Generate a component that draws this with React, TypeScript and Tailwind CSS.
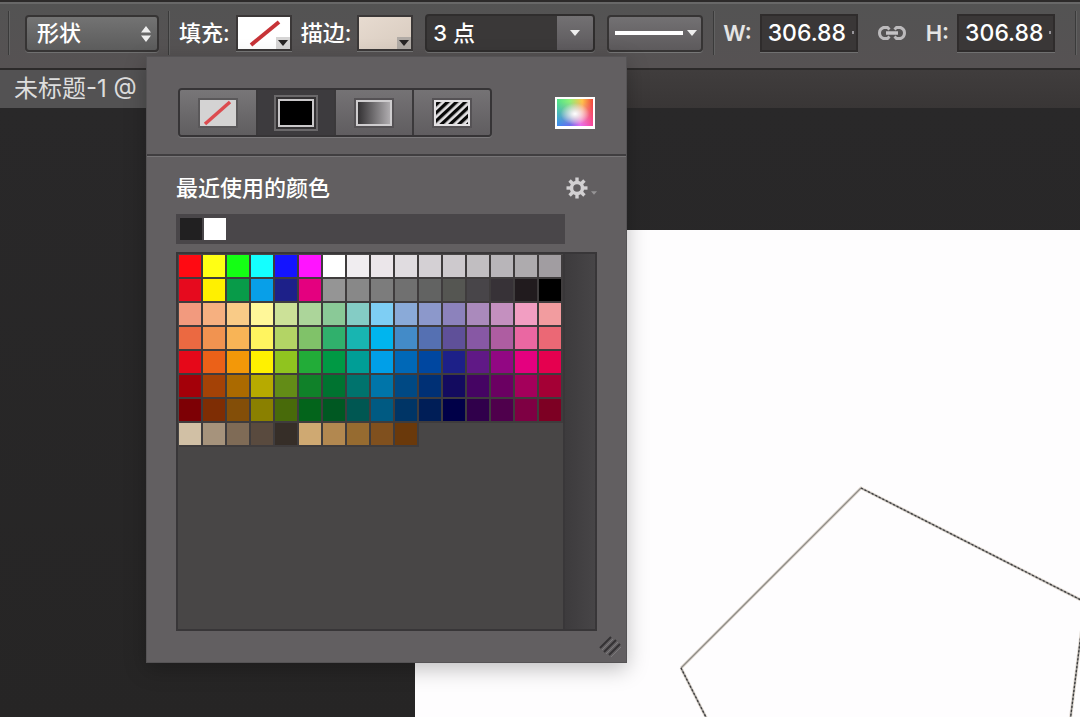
import React from "react";

const SWATCH_ROWS: string[][] = [
  ["#ff0a12", "#ffff14", "#14ff14", "#14ffff", "#1414ff", "#ff14ff", "#ffffff", "#f0edf0", "#ebe6ea", "#e0dce0", "#d4d0d4", "#cdc9cd", "#c1bec1", "#b8b5b9", "#aeabae", "#a19da1"],
  ["#e60a1e", "#fff000", "#089b49", "#089fe8", "#1d2089", "#e4007f", "#959595", "#888888", "#7c7c7c", "#707070", "#626362", "#555652", "#484549", "#373237", "#211b1e", "#000000"],
  ["#f29a7e", "#f6b080", "#f9cb87", "#fff799", "#cce198", "#acd59a", "#8ac997", "#84ccc5", "#7ecef4", "#8aaad8", "#8c98cb", "#8c82bc", "#aa8abc", "#c490bf", "#f29ec2", "#f29c9f"],
  ["#eb6941", "#f19350", "#f8b456", "#fff45f", "#b3d465", "#80c269", "#30b06c", "#18b5b1", "#00b5ee", "#438bc8", "#5570b2", "#5f5099", "#8758a4", "#ae5da1", "#ea67a2", "#eb6875"],
  ["#e60819", "#eb6118", "#f39808", "#fff100", "#90c41f", "#22ac38", "#009944", "#009e96", "#009fe8", "#0068b7", "#0047a0", "#1d2088", "#601986", "#920783", "#e4007f", "#e5004f"],
  ["#a40009", "#a44206", "#ab6a00", "#b7aa00", "#638c17", "#108129", "#007330", "#00736d", "#0075a9", "#004984", "#003075", "#130b5f", "#450463", "#6b0062", "#a4005b", "#a40035"],
  ["#7d0005", "#7e2d04", "#834e08", "#8a8000", "#486a0a", "#03641b", "#005822", "#005752", "#005a82", "#003566", "#001e57", "#000048", "#30004b", "#4f004c", "#7e0043", "#7d0023"],
  ["#d1c0a5", "#a6937c", "#7f6b56", "#594a3e", "#362e28", "#cfa972", "#b28850", "#966b30", "#80501e", "#6a390b"],
];

function Down({ className }: { className: string }) {
  return (
    <svg viewBox="0 0 10 6" className={className} aria-hidden="true">
      <path d="M0 0H10L5 6Z" fill="currentColor" />
    </svg>
  );
}

function Separator() {
  return <div className="h-11 w-px shrink-0 bg-[#3a3a3a] shadow-[1px_0_0_#626262]" />;
}

function PaintWell({ label, empty }: { label: string; empty?: boolean }) {
  return (
    <button
      aria-label={label}
      className={`relative h-9 w-14 shrink-0 border-2 border-[#3b3838] shadow-[0_1px_0_#777] ${empty ? "bg-white" : "bg-linear-to-br from-[#e7dbd0] to-[#d8cbbf]"}`}
    >
      {empty && (
        <svg viewBox="0 0 52 32" className="absolute inset-0 size-full" aria-hidden="true">
          <path d="M13 28L41 5" stroke="#c73337" strokeWidth="4" />
        </svg>
      )}
      <span className={`absolute right-0 bottom-0 flex h-3 w-3.5 items-center justify-center ${empty ? "bg-[#d6d5d5]" : "bg-[#b0aaa5]"}`}>
        <Down className="h-1.5 w-2.5 text-[#262424]" />
      </span>
    </button>
  );
}

function SizeField({ label, id }: { label: string; id: string }) {
  return (
    <>
      <label htmlFor={id} className="font-semibold text-[#e4e4e4]">{label}</label>
      <div className="relative ml-2 shrink-0">
        <input
          id={id}
          defaultValue="306.88"
          className="block h-[38px] w-[98px] border-2 border-[#2f2c2c] bg-[#3a3737] pl-1.5 text-[23px] font-medium text-white shadow-[0_1px_0_#707070] outline-none"
        />
        <span className="absolute top-[17px] right-1 h-[3px] w-0.5 bg-[#98959a]" />
      </div>
    </>
  );
}

function OptionsBar() {
  return (
    <header className="flex h-[70px] shrink-0 items-center overflow-hidden border-y-2 border-[#2c2a2a] bg-linear-to-b from-[#535353] to-[#565253] pb-1 pl-2 whitespace-nowrap text-white shadow-[inset_0_2px_0_#686868]">
      <Separator />
      <div className="relative ml-4 shrink-0">
        <select
          aria-label="形状"
          className="block h-[37px] w-[134px] appearance-none rounded border-2 border-[#363434] bg-linear-to-b from-[#737373] to-[#5c5c5c] pl-2.5 font-medium text-white shadow-[0_1px_0_#707070]"
        >
          <option>形状</option>
        </select>
        <svg viewBox="0 0 10 18" className="pointer-events-none absolute top-2.5 right-2 h-[18px] w-2.5" fill="#eee" aria-hidden="true">
          <path d="M0 7.500L5 1L10 7.500ZM0 10.500H10L5 17Z" />
        </svg>
      </div>
      <div className="ml-[9px] flex"><Separator /></div>
      <span className="mr-1.5 ml-2.5 font-medium">填充:</span>
      <PaintWell label="填充" empty />
      <span className="mr-1.5 ml-[9px] font-medium">描边:</span>
      <PaintWell label="描边" />
      <div className="ml-3 flex h-[38px] w-[170px] shrink-0 overflow-hidden rounded border-2 border-[#2f2d2d] bg-[#3a3838] shadow-[0_1px_0_#707070]">
        <input aria-label="描边宽度" defaultValue="3 点" className="w-[130px] pl-1.5 font-medium outline-none" />
        <button aria-label="选择描边宽度" className="flex flex-1 items-center justify-center bg-linear-to-b from-[#737173] to-[#5d5a5d]">
          <Down className="h-1.5 w-2.5 text-[#eee]" />
        </button>
      </div>
      <button aria-label="描边类型" className="ml-3 flex h-[37px] w-24 shrink-0 items-center gap-1 rounded border-2 border-[#363434] bg-linear-to-b from-[#737173] to-[#5d5a5c] pr-1 pl-1.5 shadow-[0_1px_0_#777]">
        <span className="h-1 flex-1 bg-white" />
        <Down className="h-1.5 w-2.5 text-[#eee]" />
      </button>
      <div className="mr-[9px] ml-2.5 flex"><Separator /></div>
      <SizeField label="W:" id="shape-width" />
      <button aria-label="链接宽高" className="mx-[19px] shrink-0">
        <svg viewBox="0 0 30 18" className="h-[18px] w-[30px]" fill="none" aria-hidden="true">
          <path d="M12.500 5.500L10.500 3.500H6.500Q2.500 5 2.500 9T6.500 14.500H10.500L12.500 12.500M17.500 5.500L19.500 3.500H23.500Q27.500 5 27.500 9T23.500 14.500H19.500L17.500 12.500" stroke="#bcbabc" strokeWidth="3" />
          <path d="M9 9H21" stroke="#c4c2c4" strokeWidth="3.500" />
        </svg>
      </button>
      <SizeField label="H:" id="shape-height" />
      <div className="ml-5 flex"><Separator /></div>
    </header>
  );
}

function FillTypes() {
  return (
    <div className="flex h-[49px] w-[314px] overflow-hidden rounded border-2 border-[#363436] shadow-[0_1px_0_#7b797b]">
      <button aria-label="无颜色" className="flex flex-1 items-center justify-center border-r-2 border-[#3b393b] bg-linear-to-b from-[#787678] to-[#605e60]">
        <svg viewBox="0 0 40 30" className="h-[30px] w-10" aria-hidden="true">
          <path d="M0 0H40V30H0Z" fill="#5a585a" />
          <path d="M2 2H38V28H2Z" fill="#d4d3d3" />
          <path d="M7 26L32 4" stroke="#dc4b4f" strokeWidth="3.500" />
        </svg>
      </button>
      <button aria-label="纯色" aria-pressed="true" className="flex flex-1 items-center justify-center border-r-2 border-[#3b393b] bg-[#3d3b3e]">
        <svg viewBox="0 0 44 36" className="h-9 w-11" aria-hidden="true">
          <path d="M1 1H43V35H1Z" fill="#343234" stroke="#6a686a" strokeWidth="2" />
          <path d="M5 5H39V31H5Z" fill="#000" stroke="#c9c7c9" strokeWidth="2" />
        </svg>
      </button>
      <button aria-label="渐变" className="flex flex-1 items-center justify-center border-r-2 border-[#3b393b] bg-linear-to-b from-[#757375] to-[#605d60]">
        <svg viewBox="0 0 40 30" className="h-[30px] w-10" aria-hidden="true">
          <defs>
            <linearGradient id="gray-ramp">
              <stop stopColor="#302e30" />
              <stop offset="1" stopColor="#b3b0b3" />
            </linearGradient>
          </defs>
          <path d="M0 0H40V30H0Z" fill="#555255" />
          <path d="M3 3H37V27H3Z" fill="url(#gray-ramp)" stroke="#cfcdcf" strokeWidth="2" />
        </svg>
      </button>
      <button aria-label="图案" className="flex flex-1 items-center justify-center bg-linear-to-b from-[#757375] to-[#605d60]">
        <svg viewBox="0 0 40 30" className="h-[30px] w-10" aria-hidden="true">
          <defs>
            <pattern id="hatch" width="6" height="6" patternUnits="userSpaceOnUse" patternTransform="rotate(47)">
              <path d="M0 0H3.300V6H0Z" fill="#080808" />
            </pattern>
          </defs>
          <path d="M0 0H40V30H0Z" fill="#555255" />
          <path d="M2 2H38V28H2Z" fill="#e4e2e4" />
          <path d="M4 4H36V26H4Z" fill="url(#hatch)" />
        </svg>
      </button>
    </div>
  );
}

function Spectrum() {
  return (
    <svg viewBox="0 0 40 32" className="h-8 w-10" aria-hidden="true">
      <defs>
        <linearGradient id="hue-top">
          <stop stopColor="#4fe08a" />
          <stop offset="0.350" stopColor="#8cf07a" />
          <stop offset="0.700" stopColor="#ffc24a" />
          <stop offset="1" stopColor="#f0463c" />
        </linearGradient>
        <linearGradient id="hue-bottom">
          <stop stopColor="#3a8cf0" />
          <stop offset="0.350" stopColor="#6a6cf0" />
          <stop offset="0.650" stopColor="#e66cf4" />
          <stop offset="1" stopColor="#f8469a" />
        </linearGradient>
        <linearGradient id="fade-down" x2="0" y2="1">
          <stop offset="0.150" stopColor="#000" />
          <stop offset="0.900" stopColor="#fff" />
        </linearGradient>
        <mask id="lower">
          <path d="M0 0H40V32H0Z" fill="url(#fade-down)" />
        </mask>
        <radialGradient id="glow" cx="0.500" cy="0.550" r="0.400">
          <stop stopColor="#fff" />
          <stop offset="1" stopColor="#fff" stopOpacity="0" />
        </radialGradient>
      </defs>
      <path d="M0 0H40V32H0Z" fill="#fff" />
      <path d="M2 2H38V29H2Z" fill="url(#hue-top)" />
      <path d="M2 2H38V29H2Z" fill="url(#hue-bottom)" mask="url(#lower)" />
      <path d="M2 2H38V29H2Z" fill="url(#glow)" />
    </svg>
  );
}

function Gear() {
  const teeth = [0, 45, 90, 135, 180, 225, 270, 315];
  return (
    <svg viewBox="0 0 22 22" className="size-[22px]" fill="none" aria-hidden="true">
      <circle cx="11" cy="11" r="5.500" stroke="#d2d0d2" strokeWidth="3.500" />
      {teeth.map((angle) => (
        <path key={angle} d="M9.300 0.500H12.700V5H9.300Z" fill="#d2d0d2" transform={`rotate(${angle} 11 11)`} />
      ))}
    </svg>
  );
}

function ColorPanel() {
  return (
    <section className="absolute top-14 left-[146px] z-10 w-[481px] border border-[#555355] bg-[#625f61] shadow-[0_6px_20px_rgba(0,0,0,0.25)]">
      <div className="flex items-center justify-between border-b-2 border-[#403e40] pt-[31px] pr-[31px] pb-[17px] pl-[31px] shadow-[0_1px_0_#777577]">
        <FillTypes />
        <button aria-label="拾色器"><Spectrum /></button>
      </div>
      <div className="pr-[29px] pb-[31px] pl-[29px]">
        <div className="flex h-[58px] items-center justify-between pt-1.5">
          <h2 className="font-medium text-white">最近使用的颜色</h2>
          <button aria-label="色板选项" className="flex items-end gap-[3px]">
            <Gear />
            <Down className="mb-1 h-1 w-1.5 text-[#969496]" />
          </button>
        </div>
        <div className="mr-8 flex h-[30px] gap-0.5 bg-[#494649] p-1">
          <button aria-label="黑色" className="size-[22px] bg-[#212021]" />
          <button aria-label="白色" className="size-[22px] bg-white" />
        </div>
        <div className="mt-2 flex h-[379px] border-2 border-[#383638] bg-[#484646]">
          <div className="flex-1 pt-px pl-px">
            {SWATCH_ROWS.map((row, r) => (
              <div key={r} className="flex">
                {row.map((color, c) => (
                  <button
                    key={c}
                    aria-label={color}
                    className="box-content size-[22px] border-r-2 border-b-2 border-[#3f3c3d]"
                    style={{ backgroundColor: color }}
                  />
                ))}
              </div>
            ))}
          </div>
          <div className="w-8 border-l-2 border-[#393739] bg-linear-to-r from-[#3d3b3d] to-[#474547]" />
        </div>
      </div>
      <svg viewBox="0 0 24 24" className="absolute right-1 bottom-1 size-6" fill="none" aria-hidden="true">
        <path d="M2 14L13 3M6 18L18 6M11 21L22 10" stroke="#343234" strokeWidth="2" />
        <path d="M4 16L15 5M8 20L20 8M13 23L23 13" stroke="#7a787a" strokeWidth="1" />
      </svg>
    </section>
  );
}

export default function App() {
  return (
    <div className="relative flex h-screen flex-col overflow-hidden bg-[#282727] font-['Inter','Noto_Sans_CJK_SC',sans-serif] text-[22px]">
      <OptionsBar />
      <nav className="flex h-[38px] shrink-0 bg-linear-to-b from-[#403d3d] to-[#393636]">
        <a href="#document" className="w-96 bg-[#535253] pl-3.5 text-[24px] leading-[38px] whitespace-nowrap text-[#dddddd]">未标题-1 @</a>
      </nav>
      <main className="flex min-h-0 flex-1 bg-linear-to-b from-[#292829] to-[#262525] pt-[122px] pl-[415px]">
        <div className="flex-1 overflow-hidden bg-[#fefdfe]">
          <svg viewBox="0 0 665 487" className="h-[487px] w-[665px]" fill="none" aria-hidden="true">
            <path d="M266 438L446 258L670 372L654 500M266 438L300 505" stroke="#e0d8d0" strokeWidth="3" />
            <path d="M266 438L446 258" stroke="#8f8d88" strokeWidth="1.300" />
            <path d="M446 258L670 372L654 500M266 438L300 505" stroke="#888" strokeWidth="1.300" />
            <path d="M446 258L670 372L654 500M266 438L300 505" stroke="#3c3c3c" strokeWidth="1.300" strokeDasharray="2 2" />
          </svg>
        </div>
      </main>
      <ColorPanel />
    </div>
  );
}
